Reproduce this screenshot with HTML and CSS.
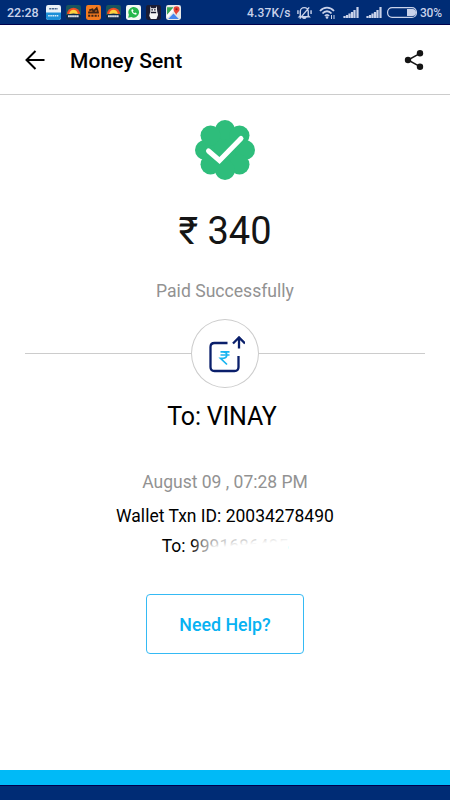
FILE: index.html
```html
<!DOCTYPE html>
<html lang="en">

<head>
  <meta charset="UTF-8">
  <meta name="viewport" content="width=device-width, initial-scale=1.0">
  <title>Money Sent</title>
  <link rel="stylesheet" href="styles.css">
</head>

<body>
  <div class="screen">
    <!-- status bar -->
    <div class="status">
      <span class="time">22:28</span>
      <div class="apps">
        <svg viewBox="0 0 14 14"><rect width="14" height="14" rx="2" fill="#e9f1f8"/><path d="M0 7h14v5a2 2 0 0 1-2 2H2a2 2 0 0 1-2-2z" fill="#1c8fd8"/><path d="M3 3.500h8" stroke="#46668f" stroke-width="1.500" stroke-dasharray="2 .5"/><path d="M2 10h10" stroke="#d5ebfa" stroke-width="1.500" stroke-dasharray="1.500 .5"/></svg>
        <svg viewBox="0 0 14 14"><rect width="14" height="14" rx="2" fill="#17555f"/><path d="M1 8.500a6 6 0 0 1 12 0z" fill="#f04a23"/><path d="M3 8.500a4 4 0 0 1 8 0z" fill="#ffd23c"/><path d="M0 9.500q7-3 14 0V12a2 2 0 0 1-2 2H2a2 2 0 0 1-2-2z" fill="#102a4c"/><path d="M2 10.500h10" stroke="#fff" stroke-width="1.800" stroke-dasharray="1.500 .4"/></svg>
        <svg viewBox="0 0 14 14"><rect width="14" height="14" rx="2" fill="#f47b20"/><path d="M3 5l3-1 1 2 3-3 1 3M2 7h10M2 10h2m1 0h2m1 0h2m1 0h1" stroke="#3e2415" stroke-width="1.700" fill="none"/></svg>
        <svg viewBox="0 0 14 14"><rect width="14" height="14" rx="2" fill="#17555f"/><path d="M1 8.500a6 6 0 0 1 12 0z" fill="#f04a23"/><path d="M3 8.500a4 4 0 0 1 8 0z" fill="#ffd23c"/><path d="M0 9.500q7-3 14 0V12a2 2 0 0 1-2 2H2a2 2 0 0 1-2-2z" fill="#102a4c"/><path d="M2 10.500h10" stroke="#fff" stroke-width="1.800" stroke-dasharray="1.500 .4"/></svg>
        <svg viewBox="0 0 14 14"><rect width="14" height="14" rx="2" fill="#f4f8f5"/><path d="M2 12l.7-3A5 5 0 1 1 5 11.300z" fill="#25b84c"/><path d="M5 4.500c0 2.500 2 4.500 4.500 4.500l.5-1.300-1.500-.7-.7.700-1.500-1.500.7-.8-.6-1.400z" fill="#fff"/></svg>
        <svg viewBox="0 0 14 14"><rect width="14" height="14" rx="2" fill="#1b1c33"/><path d="M4 1l1 2h4l1-2 .5 5 .8 3-1.500 4H4.500L3 10l1-4z" fill="#f6f6f6"/><path d="M5 4.500h1.500m1 0H9M4.500 7h5" stroke="#16172b" stroke-width="1.300"/></svg>
        <svg viewBox="0 0 14 14"><rect width="14" height="14" rx="2" fill="#e7e9e8"/><path d="M1 2h6l-6 7z" fill="#35a853"/><path d="M2 13l5-5 5 5z" fill="#4687ef"/><path d="M1 11l9-10" stroke="#fff" stroke-width="2"/><path d="M9.500 9.500C9 7 7 6.500 7 4a2.800 2.800 0 0 1 5.600 0c0 2.500-2.600 3-3.100 5.500z" fill="#e84436"/><circle cx="9.800" cy="4" r="1" fill="#8b1d1d"/></svg>
      </div>
      <span class="speed">4.37K/s</span>
      <svg class="bell" viewBox="0 0 16 14"><path d="M3.500 10V5.500a4.200 4.200 0 0 1 8.500 0V10l1 1H2.500zM6 11.500c.5 1.500 3 1.500 3.500 0M3 13L13 1M1 4v4m14-4v4" fill="none" stroke="currentColor" stroke-width="1.500"/></svg>
      <svg class="wifi" viewBox="0 0 17 13"><path d="M1 5c4-4.500 10-4.500 14 0M3.500 7.500c2.500-3 6.500-3 9 0M6 10c1-1.500 3-1.500 4 0" fill="none" stroke="currentColor" stroke-width="1.800"/><circle cx="8" cy="11.500" r="1.300" fill="currentColor"/><path d="M12.500 9v4m2.500-4v4" stroke="currentColor"/></svg>
      <svg class="signal" viewBox="0 0 16 11"><path d="M1.500 11V9M4 11V8M6.500 11V6.500M9 11V5M11.500 11V3M14.500 11V0" stroke="currentColor" stroke-width="2.200"/></svg>
      <svg class="signal" viewBox="0 0 16 11"><path d="M1.500 11V9M4 11V8M6.500 11V6.500M9 11V5M11.500 11V3M14.500 11V0" stroke="currentColor" stroke-width="2.200"/></svg>
      <svg class="battery" viewBox="0 0 30 11"><rect x=".6" y=".6" width="28.800" height="9.800" rx="4.500" fill="none" stroke="currentColor" stroke-width="1.200"/><path d="M20 2h5.500a3.500 3.500 0 0 1 0 7H20z" fill="currentColor"/></svg>
      <span class="percent">30%</span>
    </div>

    <div class="header">
      <svg class="back" viewBox="0 0 20 20"><path d="M19.500 10H1.500M10.500 1L1.500 10l9 9" fill="none" stroke="#000" stroke-width="2"/></svg>
      <h1>Money Sent</h1>
      <svg class="share" viewBox="0 0 20 20"><path d="M16 3.300L4 10l12 6.700" fill="none" stroke="#151515" stroke-width="1.500"/><circle cx="16" cy="3.300" r="3.200" fill="#151515"/><circle cx="4" cy="10" r="3.200" fill="#151515"/><circle cx="16" cy="16.700" r="3.200" fill="#151515"/></svg>
    </div>

    <div class="content">
      <svg class="badge" viewBox="0 0 60 60">
        <g fill="#2ebd7b">
          <circle cx="30" cy="30" r="23"/>
          <circle cx="30" cy="10" r="10"/>
          <circle cx="44.500" cy="15.500" r="10"/>
          <circle cx="50" cy="30" r="10"/>
          <circle cx="44.500" cy="44.500" r="10"/>
          <circle cx="30" cy="50" r="10"/>
          <circle cx="15.500" cy="44.500" r="10"/>
          <circle cx="10" cy="30" r="10"/>
          <circle cx="15.500" cy="15.500" r="10"/>
        </g>
        <path d="M13.500 31L24.500 40.500 46 18.500" fill="none" stroke="#fff" stroke-width="5" stroke-linecap="round"/>
      </svg>
      <div class="amount">₹ 340</div>
      <div class="paid">Paid Successfully</div>

      <div class="divider">
        <div class="circle">
          <svg viewBox="0 0 40 40">
            <path d="M22.500 9H9.500Q5.500 9 5.500 13v20q0 4 4 4h20q4 0 4-4V22M34 14.500V4M28 9.500L34 3.500l6 6" fill="none" stroke="#0a1f6b" stroke-width="2.300"/>
            <path d="M15.500 17.800h9M15.500 21h9M15.500 17.800H18c5 0 5 6.500 0 6.500h-2.500l6.500 6.200" fill="none" stroke="#18b4f0" stroke-width="1.700"/>
          </svg>
        </div>
      </div>

      <div class="name">To: VINAY</div>
      <div class="date">August 09 , 07:28 PM</div>
      <div class="txn">Wallet Txn ID: 20034278490</div>
      <div class="phone">To: <span class="masked">9991686485</span></div>
      <button class="help" type="button">Need Help?</button>
    </div>

    <div class="footer"></div>
  </div>
</body>

</html>
```
FILE: styles.css
```css
body {
  margin: 0;
  background-color: #fff;
  font-family: Roboto, "Noto Sans", sans-serif;
  color: #000;
}

.screen {
  width: 450px;
  height: 800px;
  display: flex;
  flex-direction: column;
  overflow: hidden;
}

/* status bar */
.status {
  box-sizing: border-box;
  height: 25px;
  flex: none;
  display: flex;
  align-items: center;
  padding: 1px 0 0 7px;
  background-color: #002c75;
  border-bottom: 1px solid #00004c;
  color: #c9d2ea;
  font-size: 12px;
  font-weight: 500;
  white-space: nowrap;
}

.status svg {
  flex: none;
}

.time {
  width: 39px;
  font-size: 12.5px;
}

.apps {
  display: flex;
  gap: 5px;
}

.apps svg {
  width: 15px;
  height: 15px;
}

.speed {
  width: 44px;
  margin-left: 66px;
  letter-spacing: 0.2px;
}

.bell {
  width: 15px;
  height: 14px;
  margin-left: 6px;
}

.wifi {
  width: 17px;
  height: 13px;
  margin-left: 7px;
}

.signal {
  width: 16px;
  height: 11px;
  margin-left: 7px;
}

.battery {
  width: 30px;
  height: 11px;
  margin-left: 5px;
}

.percent {
  margin-left: 3px;
  font-size: 12px;
  letter-spacing: -0.2px;
}

/* header */
.header {
  box-sizing: border-box;
  height: 70px;
  flex: none;
  display: flex;
  align-items: center;
  padding: 0 26px 0 25px;
  border-bottom: 1px solid #ccc;
}

.back {
  width: 20px;
  height: 20px;
}

h1 {
  flex: 1;
  margin: 2px 0 0 25px;
  font-size: 21px;
  font-weight: 500;
  letter-spacing: 0.1px;
}

.share {
  width: 20px;
  height: 20px;
}

/* content */
.content {
  flex: 1;
  display: flex;
  flex-direction: column;
  align-items: center;
  white-space: nowrap;
}

.badge {
  width: 60px;
  height: 60px;
  margin-top: 25px;
}

.amount {
  margin-top: 28px;
  font-size: 38px;
  line-height: 46px;
  color: #151515;
}

.paid {
  margin-top: 25px;
  font-size: 17.6px;
  line-height: 24px;
  color: #929292;
}

.divider {
  width: 400px;
  margin-top: 16px;
  display: flex;
  align-items: center;
}

.divider::before,
.divider::after {
  content: "";
  flex: 1;
  height: 1px;
  background-color: #ccc;
}

.circle {
  box-sizing: border-box;
  width: 68px;
  height: 69px;
  display: flex;
  justify-content: center;
  align-items: center;
  border: 1px solid #ccc;
  border-radius: 50%;
}

.circle svg {
  width: 40px;
  height: 40px;
}

.name {
  margin: 14px 6px 0 0;
  font-size: 25px;
  line-height: 30px;
  letter-spacing: -0.2px;
}

.date {
  margin-top: 38px;
  font-size: 17.5px;
  line-height: 24px;
  color: #929292;
}

.txn {
  margin-top: 10px;
  font-size: 17.5px;
  line-height: 24px;
}

.phone {
  margin-top: 6px;
  font-size: 17.5px;
  line-height: 24px;
}

/* number fades out after the first digit */
.masked {
  position: relative;
}

.masked::before,
.masked::after {
  content: "";
  position: absolute;
  inset: 0;
}

.masked::before {
  background: linear-gradient(90deg, rgba(255, 255, 255, 0) 2px, rgba(255, 255, 255, 0.6) 14px, rgba(255, 255, 255, 0.8) 32px, rgba(255, 255, 255, 0.88));
}

.masked::after {
  background: linear-gradient(175deg, rgba(255, 255, 255, 0) 28%, #fff 46%);
  left: 20px;
}

.help {
  box-sizing: border-box;
  width: 158px;
  height: 60px;
  margin-top: 36px;
  padding: 0;
  background-color: #fff;
  border: 1px solid #35baf4;
  border-radius: 4px;
  color: #08b2f2;
  font-family: inherit;
  font-size: 17.8px;
  font-weight: 500;
}

/* bottom bar */
.footer {
  box-sizing: border-box;
  height: 30px;
  flex: none;
  background: linear-gradient(#00baf7 15px, #00004c 15px, #00004c 16px, #002c75 16px);
}
```
